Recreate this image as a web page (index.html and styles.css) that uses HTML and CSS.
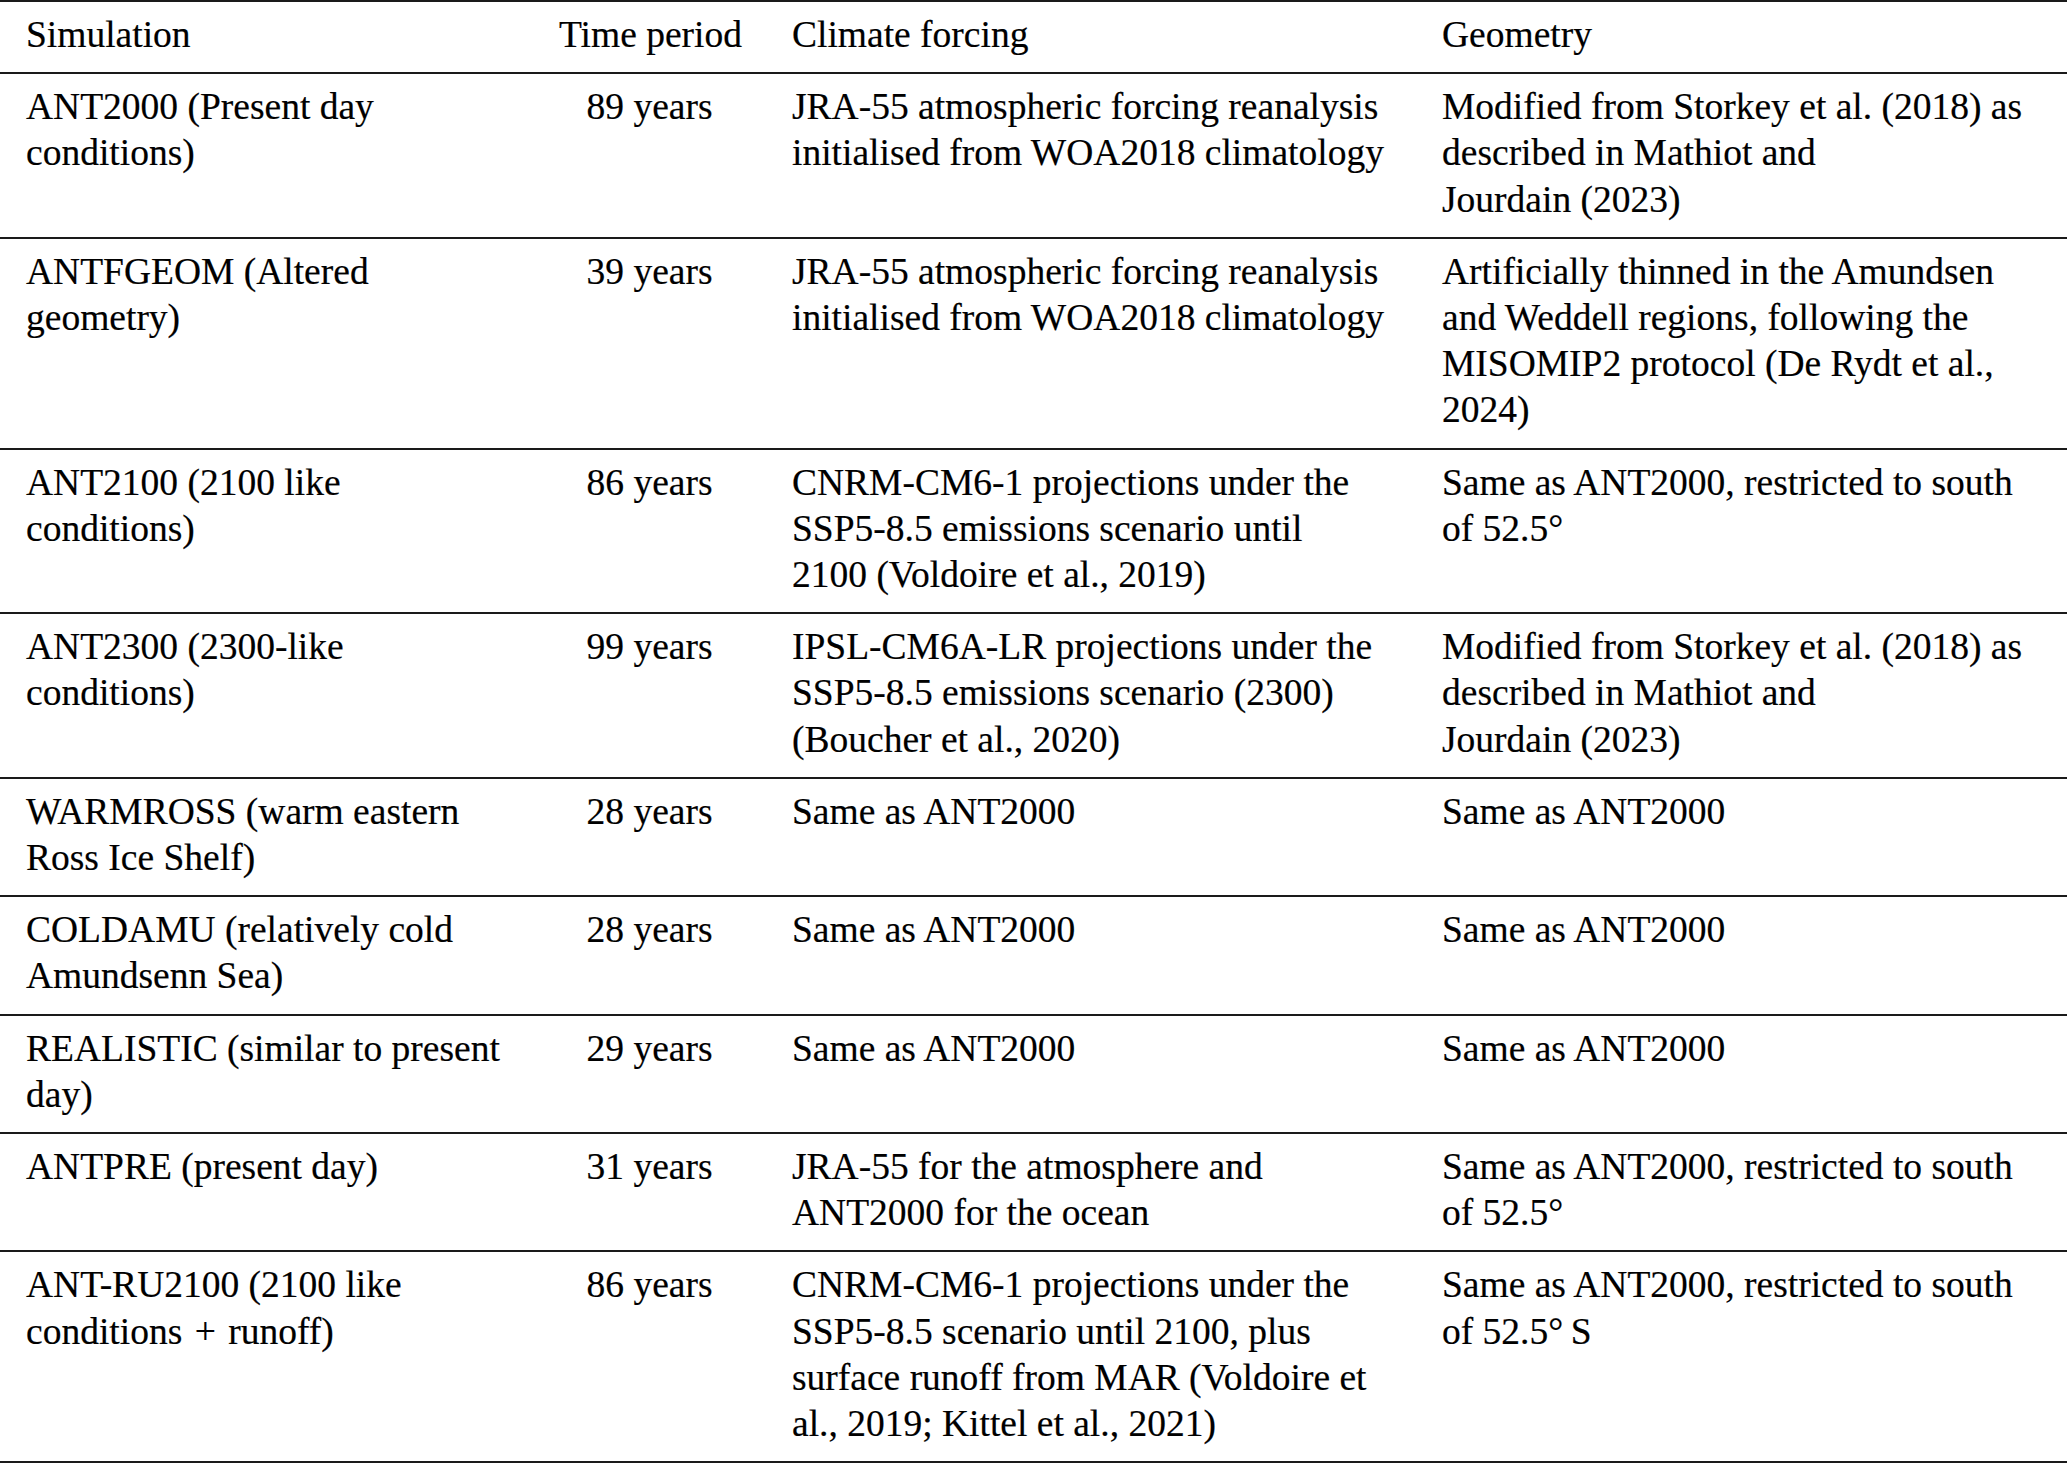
FILE: index.html
```html
<!DOCTYPE html>
<html lang="en">
<head>
<meta charset="utf-8">
<title>Simulations</title>
<link rel="stylesheet" href="styles.css">
</head>
<body>
<table class="sim-table">
  <colgroup>
    <col class="c-sim">
    <col class="c-time">
    <col class="c-forcing">
    <col class="c-geom">
  </colgroup>
  <thead>
    <tr>
      <th>Simulation</th>
      <th class="center">Time period</th>
      <th>Climate forcing</th>
      <th>Geometry</th>
    </tr>
  </thead>
  <tbody>
    <tr>
      <td>ANT2000 (Present day<br>conditions)</td>
      <td class="center">89 years</td>
      <td>JRA-55 atmospheric forcing reanalysis<br>initialised from WOA2018 climatology</td>
      <td>Modified from Storkey et al. (2018) as<br>described in Mathiot and<br>Jourdain (2023)</td>
    </tr>
    <tr>
      <td>ANTFGEOM (Altered<br>geometry)</td>
      <td class="center">39 years</td>
      <td>JRA-55 atmospheric forcing reanalysis<br>initialised from WOA2018 climatology</td>
      <td>Artificially thinned in the Amundsen<br>and Weddell regions, following the<br>MISOMIP2 protocol (De Rydt et al.,<br>2024)</td>
    </tr>
    <tr>
      <td>ANT2100 (2100 like<br>conditions)</td>
      <td class="center">86 years</td>
      <td>CNRM-CM6-1 projections under the<br>SSP5-8.5 emissions scenario until<br>2100 (Voldoire et al., 2019)</td>
      <td>Same as ANT2000, restricted to south<br>of 52.5°</td>
    </tr>
    <tr>
      <td>ANT2300 (2300-like<br>conditions)</td>
      <td class="center">99 years</td>
      <td>IPSL-CM6A-LR projections under the<br>SSP5-8.5 emissions scenario (2300)<br>(Boucher et al., 2020)</td>
      <td>Modified from Storkey et al. (2018) as<br>described in Mathiot and<br>Jourdain (2023)</td>
    </tr>
    <tr>
      <td>WARMROSS (warm eastern<br>Ross Ice Shelf)</td>
      <td class="center">28 years</td>
      <td>Same as ANT2000</td>
      <td>Same as ANT2000</td>
    </tr>
    <tr>
      <td>COLDAMU (relatively cold<br>Amundsenn Sea)</td>
      <td class="center">28 years</td>
      <td>Same as ANT2000</td>
      <td>Same as ANT2000</td>
    </tr>
    <tr>
      <td>REALISTIC (similar to present<br>day)</td>
      <td class="center">29 years</td>
      <td>Same as ANT2000</td>
      <td>Same as ANT2000</td>
    </tr>
    <tr>
      <td>ANTPRE (present day)</td>
      <td class="center">31 years</td>
      <td>JRA-55 for the atmosphere and<br>ANT2000 for the ocean</td>
      <td>Same as ANT2000, restricted to south<br>of 52.5°</td>
    </tr>
    <tr>
      <td>ANT-RU2100 (2100 like<br>conditions <span class="op">+</span> runoff)</td>
      <td class="center">86 years</td>
      <td>CNRM-CM6-1 projections under the<br>SSP5-8.5 scenario until 2100, plus<br>surface runoff from MAR (Voldoire et<br>al., 2019; Kittel et al., 2021)</td>
      <td>Same as ANT2000, restricted to south<br>of 52.5°&#8201;S</td>
    </tr>
  </tbody>
</table>
</body>
</html>
```

FILE: styles.css
```css
html, body {
  margin: 0;
  padding: 0;
  background: #ffffff;
}

body {
  font-family: "Liberation Serif", "Times New Roman", serif;
  color: #000000;
}

.sim-table {
  width: 2067px;
  table-layout: fixed;
  border-collapse: collapse;
  border-top: 2px solid #1a1a1a;
  font-size: 37.5px;
  line-height: 46.2px;
  -webkit-text-stroke: 0.2px #000000;
}

.c-sim { width: 533px; }
.c-time { width: 233px; }
.c-forcing { width: 650px; }
.c-geom { width: 651px; }

.sim-table th,
.sim-table td {
  padding: 10px 26px 14px 26px;
  text-align: left;
  vertical-align: top;
  white-space: nowrap;
  font-weight: normal;
}

.sim-table thead tr,
.sim-table tbody tr {
  border-bottom: 2px solid #1a1a1a;
}

.sim-table .center {
  text-align: center;
}

.op {
  padding: 0 3px;
}
```
